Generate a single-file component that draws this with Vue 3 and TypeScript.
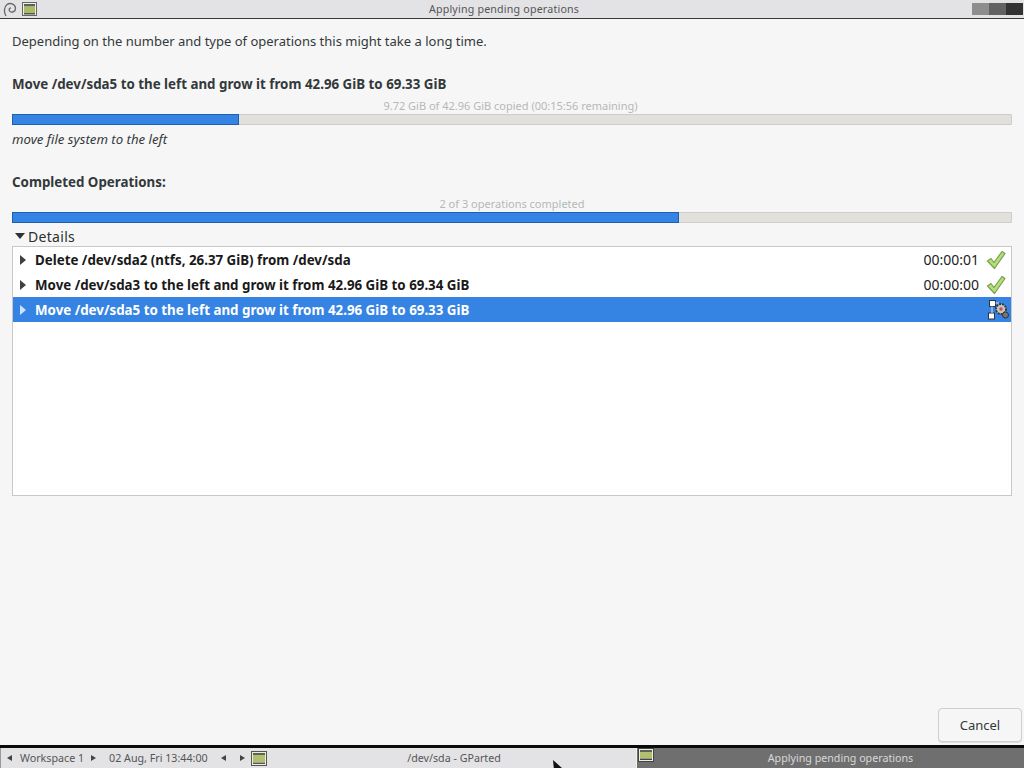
<script setup lang="ts">
interface Row { name: string; time: string; state: 'done' | 'busy' }
const rows: Row[] = [
  { name: 'Delete /dev/sda2 (ntfs, 26.37 GiB) from /dev/sda', time: '00:00:01', state: 'done' },
  { name: 'Move /dev/sda3 to the left and grow it from 42.96 GiB to 69.34 GiB', time: '00:00:00', state: 'done' },
  { name: 'Move /dev/sda5 to the left and grow it from 42.96 GiB to 69.33 GiB', time: '', state: 'busy' },
]
</script>

<template>
  <div class="screen">
    <header class="titlebar">
      <div class="tb-left">
        <svg class="swirl" width="14" height="16" viewBox="0 0 14 16" fill="none" stroke="#666" stroke-width="1.300">
          <path d="M3 15C0.500 11 1 6 4 3.500C7 1.500 12 2.500 12.500 7C12.800 10.500 9 12 7 10.500C5.500 9.300 6 7 8 6.800" />
        </svg>
        <svg width="15" height="14" viewBox="0 0 15 14">
          <rect x="0.500" y="0.500" width="14" height="13" fill="#efefe4" stroke="#666" />
          <rect x="2" y="2" width="11" height="2.500" fill="#58645a" />
          <rect x="2" y="4.500" width="11" height="6.500" fill="#aabb66" />
          <rect x="2" y="11" width="11" height="1.500" fill="#555" />
        </svg>
      </div>
      <span class="tb-title">Applying pending operations</span>
      <div class="tb-buttons">
        <i class="wb wb1"></i><i class="wb wb2"></i><i class="wb wb3"></i>
      </div>
    </header>

    <main class="dialog">
      <p class="intro">Depending on the number and type of operations this might take a long time.</p>
      <h2 class="op-title">Move /dev/sda5 to the left and grow it from 42.96 GiB to 69.33 GiB</h2>
      <div class="bar-caption first">9.72 GiB of 42.96 GiB copied (00:15:56 remaining)</div>
      <div class="bar"><div class="fill fill-a"></div></div>
      <em class="sub">move file system to the left</em>
      <h2 class="completed">Completed Operations:</h2>
      <div class="bar-caption second">2 of 3 operations completed</div>
      <div class="bar"><div class="fill fill-b"></div></div>
      <div class="details"><span class="tri-down"></span>Details</div>
      <div class="list">
        <div v-for="r in rows" :key="r.name" class="row" :class="{ selected: r.state === 'busy' }">
          <span class="tri-right"></span>
          <span class="name">{{ r.name }}</span>
          <span class="time">{{ r.time }}</span>
          <svg v-if="r.state === 'done'" class="state" width="20" height="20" viewBox="0 0 20 20">
            <path d="M1.500 11L5 8.500L8 12.500L16 1.500L19 3.500L8.500 18.500Z" fill="#b4de7c" stroke="#7ba04a" stroke-width="1.200" stroke-linejoin="round" />
          </svg>
          <svg v-else class="state busy" width="22" height="22" viewBox="0 0 22 22">
            <rect x="2.500" y="1.500" width="6" height="6" fill="#fff" stroke="#333" />
            <rect x="1.500" y="14" width="6" height="6" fill="#fff" stroke="#333" />
            <path d="M5 7.500V14M8.500 4H12" stroke="#dde" fill="none" />
            <circle cx="14" cy="10" r="5" fill="#c9c4c0" stroke="#333" stroke-width="1.800" stroke-dasharray="2 1" />
            <circle cx="14" cy="10" r="1.700" fill="#b05a4a" />
            <circle cx="18.500" cy="16" r="3" fill="#777" stroke="#333" />
          </svg>
        </div>
      </div>
      <div class="actions"><button class="cancel" type="button">Cancel</button></div>
    </main>

    <footer class="taskbar">
      <div class="pager">
        <span class="arr-l"></span>
        <span class="workspace">Workspace 1</span>
        <span class="arr-r"></span>
        <span class="clock">02 Aug, Fri 13:44:00</span>
        <span class="arr-l"></span>
        <span class="arr-r second-r"></span>
        <svg class="tray" width="16" height="15" viewBox="0 0 16 15">
          <rect x="0.500" y="0.500" width="15" height="14" fill="#eeeed8" stroke="#555" />
          <rect x="2" y="2" width="12" height="2" fill="#58645a" />
          <rect x="2" y="4" width="12" height="7" fill="#b0c070" />
          <rect x="2" y="11.500" width="12" height="1.500" fill="#555" />
        </svg>
      </div>
      <div class="task inactive">/dev/sda - GParted</div>
      <div class="task active">
        <svg class="task-icon" width="16" height="14" viewBox="0 0 16 14">
          <rect x="0.500" y="0.500" width="15" height="13" fill="#eeeed8" stroke="#444" />
          <rect x="2" y="2" width="12" height="2" fill="#58645a" />
          <rect x="2" y="4" width="12" height="6" fill="#b0c070" />
          <rect x="2" y="10.500" width="12" height="1.500" fill="#444" />
        </svg>
        <span>Applying pending operations</span>
      </div>
      <svg class="cursor" width="10" height="10" viewBox="0 0 10 10"><path d="M0 0L9 8H4L1 10Z" fill="#111" /></svg>
    </footer>
  </div>
</template>

<style>
html, body { margin: 0; padding: 0; overflow: hidden; }
</style>

<style scoped>
.screen {
  position: relative;
  width: 1024px;
  height: 768px;
  display: flex;
  flex-direction: column;
  overflow: hidden;
  font-family: "Noto Sans", "Open Sans", sans-serif;
  background: #f6f6f6;
  color: #2e3436;
}
.titlebar {
  height: 18px;
  flex: none;
  display: flex;
  align-items: center;
  position: relative;
  background: #e3e3e6;
  border-bottom: 1px solid #3a3a3a;
}
.tb-left { display: flex; align-items: center; gap: 5px; padding-left: 3px; }
.tb-title {
  position: absolute;
  left: 0;
  right: 16px;
  text-align: center;
  font-size: 10.650px;
  color: #555;
  letter-spacing: 0.2px;
}
.tb-buttons { margin-left: auto; display: flex; margin-right: 1px; }
.wb { display: block; width: 17px; height: 12px; }
.wb1 { background: #8d8d8d; }
.wb2 { background: #626262; }
.wb3 { background: #333; }
.dialog {
  flex: 1;
  min-height: 0;
  display: flex;
  flex-direction: column;
  padding: 0 12px;
  background: #f6f6f6;
}
.intro { margin: 13px 0 0; font-size: 13px; line-height: 18px; color: #33393b; }
.op-title, .completed { margin: 0; font-size: 13.330px; line-height: 18px; font-weight: 700; color: #33393b; }
.op-title { margin-top: 25px; }
.completed { margin-top: 25px; }
.bar-caption { text-align: center; font-size: 11px; line-height: 14px; color: #b5b8b8; }
.bar-caption.first { margin-top: 6px; padding-right: 3px; }
.bar-caption.second { margin-top: 6px; }
.bar {
  height: 9px;
  margin-top: 1px;
  background: #e2e0dc;
  border: 1px solid #cfcdc9;
  border-radius: 1px;
  box-sizing: content-box;
  display: flex;
}
.fill { height: 100%; background: #3584e4; outline: 1px solid #1f5fb0; }
.fill-a { width: 22.500%; }
.fill-b { width: 66.600%; }
.sub { margin-top: 5px; font-size: 13.200px; line-height: 18px; color: #33393b; }
.details {
  margin-top: 4px;
  height: 18px;
  margin-bottom: 1px;
  display: flex;
  align-items: center;
  font-size: 14px;
  letter-spacing: 0.300px;
  font-weight: 400;
  color: #2a2f31;
}
.tri-down {
  width: 0;
  height: 0;
  margin: 0 3px 0 3px;
  border-left: 5px solid transparent;
  border-right: 5px solid transparent;
  border-top: 6px solid #2e3436;
}
.list {
  height: 248px;
  flex: none;
  background: #fff;
  border: 1px solid #c8c8c4;
}
.row {
  height: 25px;
  box-sizing: border-box;
  display: flex;
  align-items: center;
  font-size: 13.330px;
  font-weight: 700;
  color: #1a1a1a;
}
.row.selected { background: #3584e4; color: #fff; }
.tri-right {
  width: 0;
  height: 0;
  margin-left: 7px;
  margin-right: 9px;
  border-top: 5.500px solid transparent;
  border-bottom: 5.500px solid transparent;
  border-left: 6px solid #3c4244;
}
.selected .tri-right { border-left-color: #cfe2fa; }
.name { flex: 1; }
.time { font-size: 14px; font-weight: 400; color: #222; margin-right: 7px; }
.state { margin-right: 5px; flex: none; }
.state.busy { margin-right: 2px; }
.actions { margin-top: auto; display: flex; justify-content: flex-end; margin-right: -10px; padding-bottom: 3px; }
.cancel {
  width: 84px;
  height: 34px;
  font-family: inherit;
  font-size: 13px;
  color: #33393b;
  background: #f6f6f6;
  border: 1px solid #cfcfcb;
  border-radius: 4px;
  box-shadow: 0 1px 1px rgba(0, 0, 0, 0.1);
}
.taskbar {
  flex: none;
  height: 20px;
  border-top: 3px solid #0a0a0a;
  display: flex;
  background: #e3e3e6;
  font-size: 10.700px;
  line-height: 20px;
  color: #555;
  position: relative;
}
.pager {
  width: 272px;
  flex: none;
  display: flex;
  align-items: center;
  box-sizing: border-box;
  padding-left: 6px;
  border-left: 1px solid #999;
}
.arr-l, .arr-r { width: 0; height: 0; border-top: 3px solid transparent; border-bottom: 3px solid transparent; }
.arr-l { border-right: 5px solid #444; }
.arr-r { border-left: 5px solid #444; }
.workspace { margin: 0 7px 0 8px; }
.clock { margin: 0 13px 0 13px; }
.second-r { margin-left: 14px; }
.tray { margin-left: 6px; }
.task { height: 20px; box-sizing: border-box; }
.inactive { width: 364px; flex: none; text-align: center; }
.active {
  flex: 1;
  display: flex;
  align-items: center;
  background: #6f6f6f;
  color: #d8d8d8;
  position: relative;
  border-left: 1px solid #f0f0f0;
  justify-content: center;
  padding-left: 20px;
}
.task-icon { position: absolute; left: 1px; top: 0; }
.cursor { position: absolute; left: 553px; top: 12px; }
</style>
